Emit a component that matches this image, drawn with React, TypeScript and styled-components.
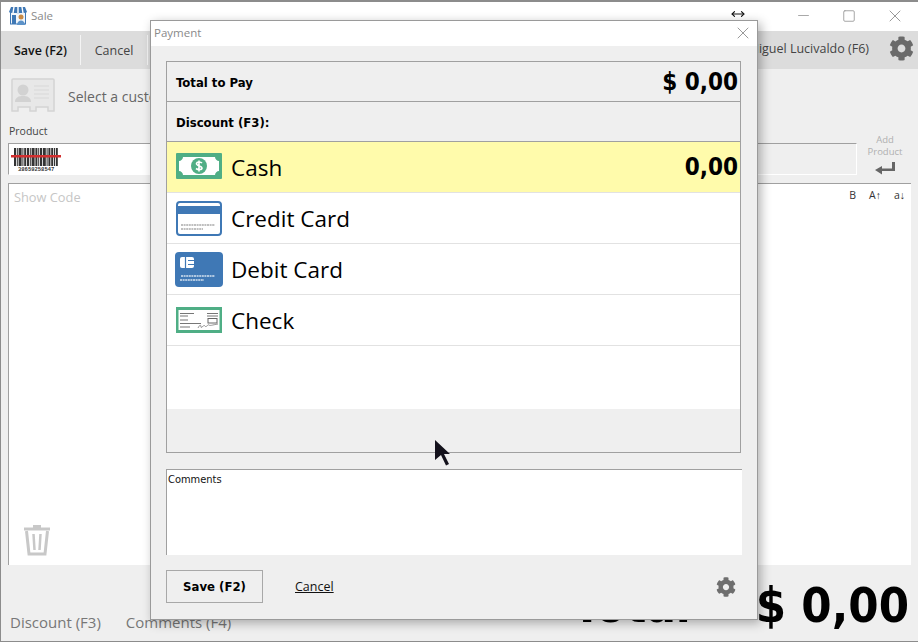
import React from 'react';
import styled, { createGlobalStyle } from 'styled-components';
import { FaCog } from 'react-icons/fa';
import { X, Minus, Square, MoveHorizontal } from 'lucide-react';

const GlobalStyle = createGlobalStyle`
  html, body {
    margin: 0;
    padding: 0;
    background: #efefef;
  }
  * {
    box-sizing: border-box;
  }
`;

const uiFont = `"Open Sans", "Noto Sans", sans-serif`;
const boldFont = `"DejaVu Sans", Verdana, sans-serif`;

const Stage = styled.div`
  position: relative;
  width: 918px;
  height: 642px;
  overflow: hidden;
  font-family: ${uiFont};
`;

const MainWindow = styled.div`
  width: 918px;
  height: 642px;
  display: flex;
  flex-direction: column;
  background: #efefef;
  border: 1px solid #8c8c8c;
  border-top-width: 2px;
  border-right: none;
`;

const TitleBar = styled.div`
  height: 29px;
  flex: none;
  display: flex;
  align-items: center;
  background: #fff;
  padding: 0 0 2px 8px;
`;

const WindowTitle = styled.span`
  margin-left: 4px;
  font-size: 11.5px;
  color: #8a8a8a;
`;

const WindowButtons = styled.div`
  margin-left: auto;
  display: flex;
  align-items: center;
  color: #999;
`;

const WindowButton = styled.div`
  width: 46px;
  height: 27px;
  display: flex;
  align-items: center;
  justify-content: center;
`;

const Toolbar = styled.div`
  height: 38px;
  flex: none;
  display: flex;
  align-items: center;
  background: #dcdcdc;
`;

const ToolButton = styled.div<{ $dark?: boolean; $width: number }>`
  width: ${p => p.$width}px;
  height: 30px;
  display: flex;
  align-items: center;
  justify-content: center;
  font-size: 12.5px;
  color: ${p => (p.$dark ? '#111' : '#444')};
  font-weight: ${p => (p.$dark ? 600 : 400)};
  border-right: 1px solid #f4f4f4;
`;

const UserName = styled.div`
  margin-left: auto;
  font-size: 12.5px;
  color: #444;
  margin-right: 20px;
  margin-top: -3px;
`;

const ToolGear = styled.div`
  width: 28px;
  height: 28px;
  margin-right: 1px;
  color: #6a6a6a;
`;

const CustomerRow = styled.div`
  height: 54px;
  flex: none;
  display: flex;
  align-items: center;
  padding: 0 0 0 10px;
  gap: 13px;
`;

const CustomerText = styled.span`
  font-size: 14px;
  color: #666;
`;

const ProductRow = styled.div`
  height: 60px;
  flex: none;
  display: flex;
  padding: 1px 0 0 7px;
`;

const Field = styled.div<{ $width: number; $gap?: number }>`
  width: ${p => p.$width}px;
  margin-left: ${p => p.$gap ?? 0}px;
  display: flex;
  flex-direction: column;
  gap: 4px;
`;

const FieldLabel = styled.label`
  font-size: 10.5px;
  line-height: 15px;
  color: #444;
  padding-left: 1px;
  height: 15px;
`;

const FieldBox = styled.div<{ $white?: boolean }>`
  height: 32px;
  background: ${p => (p.$white ? '#fff' : '#efefef')};
  border: 1px solid #a0a0a0;
  border-bottom-color: #fff;
  border-right-color: #fff;
  padding: 3px 0 0 2px;
`;

const AddProduct = styled.div`
  width: 56px;
  display: flex;
  flex-direction: column;
  align-items: center;
  gap: 4px;
  font-size: 9.5px;
  line-height: 11.5px;
  color: #b0b0b0;
  text-align: center;
  padding-top: 10px;
`;

const WorkArea = styled.div`
  position: relative;
  flex: none;
  width: 903px;
  height: 382px;
  margin-left: 7px;
  background: #fff;
  border-top: 1px solid #a0a0a0;
  border-left: 1px solid #a0a0a0;
  display: flex;
  flex-direction: column;
  justify-content: space-between;
`;

const WorkTop = styled.div`
  display: flex;
  justify-content: space-between;
  padding: 4px 6px 0 5px;
`;

const ShowCode = styled.span`
  font-size: 12.8px;
  color: #c6c6c6;
`;

const SortTools = styled.div`
  display: flex;
  gap: 13px;
  font-size: 10.5px;
  color: #333;
`;

const TrashBin = styled.div`
  padding: 0 0 9px 14px;
  height: 42px;
  color: #c8c8c8;
`;

const BottomBar = styled.div`
  flex: 1;
  display: flex;
  align-items: flex-end;
  padding: 0 9px 6px 9px;
`;

const BottomLink = styled.span`
  font-size: 15px;
  color: #777;
  margin-right: 25px;
  margin-bottom: 3px;
`;

const GrandTotal = styled.div`
  margin-left: auto;
  display: flex;
  gap: 65px;
  font-family: ${boldFont};
  font-stretch: condensed;
  font-weight: 700;
  font-size: 48.5px;
  line-height: 60px;
  color: #000;
`;

const Dialog = styled.div`
  position: absolute;
  left: 150px;
  top: 20px;
  width: 608px;
  height: 600px;
  display: flex;
  flex-direction: column;
  background: #efefef;
  border: 1px solid #9a9a9a;
  box-shadow: 3px 3px 10px rgba(0, 0, 0, 0.3);
`;

const DialogTitle = styled.div`
  height: 25px;
  flex: none;
  display: flex;
  align-items: center;
  justify-content: space-between;
  background: #fff;
  padding: 0 4px 2px 3px;
  font-size: 11.5px;
  color: #8a8a8a;
`;

const DialogBody = styled.div`
  flex: 1;
  display: flex;
  flex-direction: column;
  padding: 15px 15px 0 15px;
`;

const PayPanel = styled.div`
  width: 575px;
  height: 392px;
  flex: none;
  display: flex;
  flex-direction: column;
  border: 1px solid #a0a0a0;
`;

const SummaryRow = styled.div`
  height: 40px;
  flex: none;
  display: flex;
  align-items: center;
  justify-content: space-between;
  padding: 2px 2px 0 9px;
  border-bottom: 1px solid #a0a0a0;
  font-family: ${boldFont};
  font-stretch: condensed;
  font-weight: 700;
  font-size: 13px;
  color: #000;
`;

const BigValue = styled.span`
  font-size: 24px;
  margin-top: -2px;
`;

const MethodList = styled.div`
  height: 267px;
  flex: none;
  background: #fff;
`;

const MethodRow = styled.div<{ $active?: boolean }>`
  height: 51px;
  display: flex;
  align-items: center;
  padding: 0 2px 0 8px;
  background: ${p => (p.$active ? '#fffbab' : '#fff')};
  border-bottom: 1px solid #e2e2e2;
`;

const MethodIcon = styled.div<{ $lift?: number }>`
  width: 48px;
  height: 36px;
  flex: none;
  display: flex;
  align-items: center;
  justify-content: center;
  margin-top: ${p => -(p.$lift ?? 0) * 2}px;
`;

const MethodName = styled.span`
  margin-left: 8px;
  font-size: 22.5px;
  color: #000;
`;

const MethodValue = styled.span`
  margin-left: auto;
  font-family: ${boldFont};
  font-stretch: condensed;
  font-weight: 700;
  font-size: 24px;
  color: #000;
`;

const Comments = styled.div`
  width: 576px;
  height: 86px;
  margin-top: 16px;
  flex: none;
  background: #fff;
  border-top: 1px solid #a0a0a0;
  border-left: 1px solid #a0a0a0;
  padding: 3px 1px;
  font-family: ${boldFont};
  font-stretch: condensed;
  font-size: 11px;
  color: #111;
`;

const DialogFooter = styled.div`
  margin-top: 15px;
  display: flex;
  align-items: center;
`;

const SaveButton = styled.button`
  width: 97px;
  height: 33px;
  background: #efefef;
  border: 1px solid #a8a8a8;
  font-family: ${boldFont};
  font-stretch: condensed;
  font-weight: 700;
  font-size: 13px;
  color: #000;
`;

const CancelLink = styled.a`
  margin-left: 32px;
  font-size: 12.5px;
  color: #111;
  text-decoration: underline;
`;

const FooterGear = styled.div`
  margin-left: auto;
  margin-right: 6px;
  width: 20px;
  height: 20px;
  color: #6e6e6e;
`;

const PointerCursor = styled.svg`
  position: absolute;
  left: 435px;
  top: 440px;
`;

const ResizeCursor = styled.div`
  position: absolute;
  left: 731px;
  top: 4px;
  color: #111;
`;

const AppIcon = () => (
  <svg width="18" height="18" viewBox="0 0 18 18">
    <rect x="1.500" y="5" width="15" height="12" fill="#f2f6fa" stroke="#3f78b5" />
    <path d="M2 0h14l2 5c0 1.500-18 1.500-18 0z" fill="#3f78b5" />
    <path d="M5 0L4 6M9 0v6M13 0l1 6" stroke="#fff" strokeWidth="1.400" />
    <rect x="3" y="8" width="4" height="9" fill="#3f78b5" />
    <circle cx="12" cy="10" r="2.500" fill="#c98a45" />
    <path d="M8 18c0-6 8-6 8 0z" fill="#5d93c9" />
  </svg>
);

const CashIcon = () => (
  <svg width="46" height="26" viewBox="0 0 46 26">
    <rect width="46" height="26" rx="1" fill="#4fae85" />
    <path d="M7 4h32c0 2 2 4 4 4v10c-2 0-4 2-4 4H7c0-2-2-4-4-4V8c2 0 4-2 4-4z" fill="#fff" />
    <circle cx="23" cy="13" r="8" fill="#4fae85" />
    <path d="M26 10c-1-1-5-2-5.500 .5S26 13 26 15s-4 2-6 .5M23 7.500v11" stroke="#fff" strokeWidth="1.600" fill="none" />
  </svg>
);

const CreditIcon = () => (
  <svg width="46" height="35" viewBox="0 0 46 35">
    <rect x="1" y="1" width="44" height="33" rx="3" fill="#fff" stroke="#3f78b5" strokeWidth="2" />
    <rect x="1" y="5" width="44" height="8" fill="#3f78b5" />
    <path d="M5 24h34M5 28h22" stroke="#aaa" strokeWidth="1.500" strokeDasharray="2 .6" />
  </svg>
);

const DebitIcon = () => (
  <svg width="48" height="35" viewBox="0 0 48 35">
    <rect width="48" height="35" rx="4" fill="#3f78b5" />
    <rect x="5" y="5" width="14" height="11" rx="2" fill="#fff" />
    <path d="M10.500 5v11M13 8.500h6M13 12.500h6" stroke="#3f78b5" strokeWidth="1.200" />
    <path d="M6 24h34M5 28h24" stroke="#d5e2f0" strokeWidth="1.500" strokeDasharray="2 .6" />
  </svg>
);

const CheckIcon = () => (
  <svg width="46" height="26" viewBox="0 0 46 26">
    <rect x="1" y="1.500" width="44" height="23" fill="#fff" stroke="#4fae85" strokeWidth="3" />
    <path d="M4 6.500h14M4 9h8M31 6.500h11M31 9h11M4 13h8M4 16.500h21M4 20h10" stroke="#777" strokeWidth="1" />
    <rect x="32" y="11.500" width="9" height="4.500" fill="none" stroke="#666" />
    <path d="M22 21c2-4 3-3 3-1s3-3 4-1 3-2 4-1 3 0 9-1" stroke="#777" strokeWidth=".8" fill="none" />
  </svg>
);

const CustomerCard = () => (
  <svg width="44" height="36" viewBox="0 0 44 36">
    <path d="M2 1h40a1 1 0 0 1 1 1v31h-6v-4H25v4h-6v-4H7v4H1V2a1 1 0 0 1 1-1z" fill="#e8e8e8" stroke="#d4d4d4" strokeWidth="1.500" />
    <circle cx="12" cy="12" r="5.500" fill="#d2d2d2" />
    <path d="M4 24c0-5 4-6 8-6s8 1 8 6z" fill="#d2d2d2" />
    <path d="M23 8h15M23 12h15M23 16h15M23 20h15" stroke="#d8d8d8" />
  </svg>
);

const Barcode = () => {
  const bars = [2, 1, 3, 1, 2, 2, 1, 3, 2, 1, 2, 3, 1, 2, 2, 1, 2];
  let x = 3;
  return (
    <svg width="52" height="26" viewBox="0 0 52 26">
      {bars.map((w, i) => {
        const bar = <rect key={i} x={x} y="1" width={w} height="18" fill="#333" />;
        x += w + 0.8;
        return bar;
      })}
      <rect x="0" y="8" width="50" height="2.500" fill="#d22f2f" />
      <text x="7" y="23.500" fontSize="5.500" fontFamily="Liberation Mono, monospace" fontWeight="700" fill="#333">38659258547</text>
    </svg>
  );
};

const TrashIcon = () => (
  <svg width="28" height="33" viewBox="0 0 28 33" fill="none" stroke="currentColor">
    <path d="M1 6h26" strokeWidth="3" />
    <path d="M10 3.500h8" strokeWidth="3" />
    <path d="M3.500 8l2.500 23h16l2.500-23" strokeWidth="3" />
    <path d="M10.500 11l1 16M17.500 11l-1 16" strokeWidth="2.500" />
  </svg>
);

const EnterArrow = () => (
  <svg width="22" height="14" viewBox="0 0 22 14" fill="#666">
    <path d="M18 1h3v9H8v3.500L1 9l7-4v2.500h10z" />
  </svg>
);

const App: React.FC = () => {
  return (
    <Stage>
      <GlobalStyle />
      <MainWindow>
        <TitleBar>
          <AppIcon />
          <WindowTitle>Sale</WindowTitle>
          <WindowButtons>
            <WindowButton><Minus size={17} strokeWidth={1.2} /></WindowButton>
            <WindowButton><Square size={14} strokeWidth={1.5} /></WindowButton>
            <WindowButton><X size={20} strokeWidth={1.2} /></WindowButton>
          </WindowButtons>
        </TitleBar>
        <Toolbar>
          <ToolButton $dark $width={80}>Save (F2)</ToolButton>
          <ToolButton $width={67}>Cancel</ToolButton>
          <UserName>Miguel Lucivaldo (F6)</UserName>
          <ToolGear><FaCog size={25} /></ToolGear>
        </Toolbar>
        <CustomerRow>
          <CustomerCard />
          <CustomerText>Select a customer</CustomerText>
        </CustomerRow>
        <ProductRow>
          <Field $width={500}>
            <FieldLabel>Product</FieldLabel>
            <FieldBox $white><Barcode /></FieldBox>
          </Field>
          <Field $width={249} $gap={100}>
            <FieldLabel>Total</FieldLabel>
            <FieldBox />
          </Field>
          <AddProduct>
            <span>Add<br />Product</span>
            <EnterArrow />
          </AddProduct>
        </ProductRow>
        <WorkArea>
          <WorkTop>
            <ShowCode>Show Code</ShowCode>
            <SortTools>
              <span>B</span>
              <span>A↑</span>
              <span>a↓</span>
            </SortTools>
          </WorkTop>
          <TrashBin><TrashIcon /></TrashBin>
        </WorkArea>
        <BottomBar>
          <BottomLink>Discount (F3)</BottomLink>
          <BottomLink>Comments (F4)</BottomLink>
          <GrandTotal>
            <span>Total</span>
            <span>$ 0,00</span>
          </GrandTotal>
        </BottomBar>
      </MainWindow>

      <Dialog>
        <DialogTitle>
          Payment
          <X size={20} strokeWidth={1.2} color="#999" />
        </DialogTitle>
        <DialogBody>
          <PayPanel>
            <SummaryRow>
              Total to Pay
              <BigValue>$ 0,00</BigValue>
            </SummaryRow>
            <SummaryRow>Discount (F3):</SummaryRow>
            <MethodList>
              <MethodRow $active>
                <MethodIcon $lift={1}><CashIcon /></MethodIcon>
                <MethodName>Cash</MethodName>
                <MethodValue>0,00</MethodValue>
              </MethodRow>
              <MethodRow>
                <MethodIcon><CreditIcon /></MethodIcon>
                <MethodName>Credit Card</MethodName>
              </MethodRow>
              <MethodRow>
                <MethodIcon><DebitIcon /></MethodIcon>
                <MethodName>Debit Card</MethodName>
              </MethodRow>
              <MethodRow>
                <MethodIcon><CheckIcon /></MethodIcon>
                <MethodName>Check</MethodName>
              </MethodRow>
            </MethodList>
          </PayPanel>
          <Comments>Comments</Comments>
          <DialogFooter>
            <SaveButton>Save (F2)</SaveButton>
            <CancelLink>Cancel</CancelLink>
            <FooterGear><FaCog size={20} /></FooterGear>
          </DialogFooter>
        </DialogBody>
      </Dialog>

      <ResizeCursor><MoveHorizontal size={14} strokeWidth={2} /></ResizeCursor>
      <PointerCursor width="16" height="26" viewBox="0 0 16 26">
        <path d="M0 0l15 14H9l5 10-3 1.500L6 15l-6 5z" fill="#14121c" />
      </PointerCursor>
    </Stage>
  );
};

export default App;
